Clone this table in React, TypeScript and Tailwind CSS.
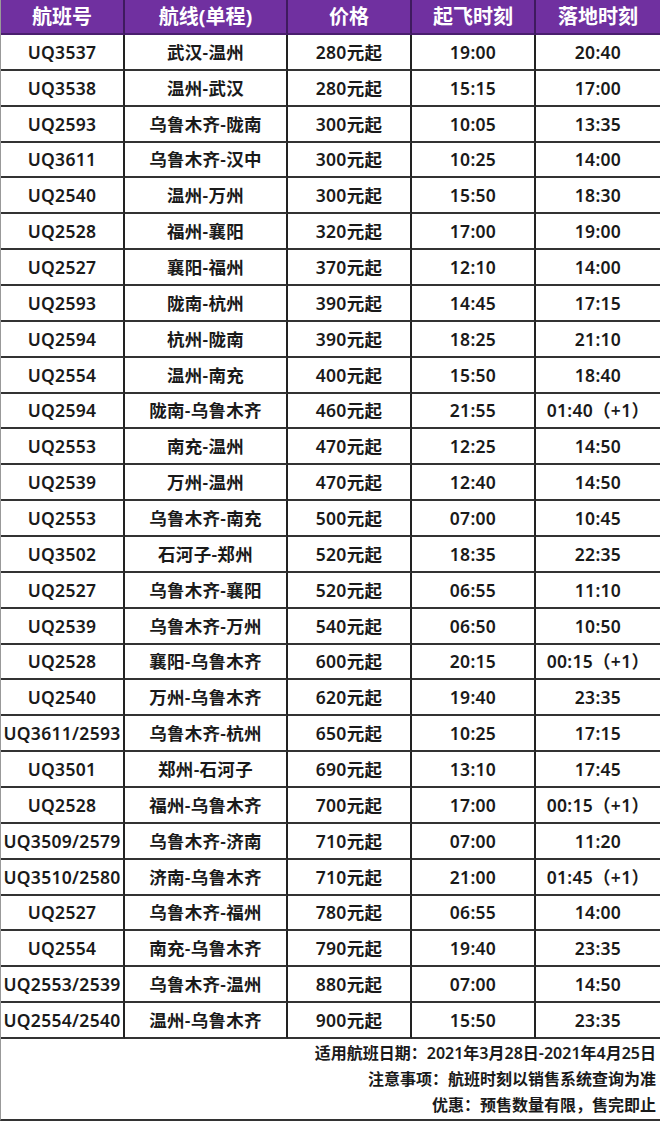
import React from "react";

const rows: string[][] = [
  ["UQ3537", "武汉-温州", "280元起", "19:00", "20:40"],
  ["UQ3538", "温州-武汉", "280元起", "15:15", "17:00"],
  ["UQ2593", "乌鲁木齐-陇南", "300元起", "10:05", "13:35"],
  ["UQ3611", "乌鲁木齐-汉中", "300元起", "10:25", "14:00"],
  ["UQ2540", "温州-万州", "300元起", "15:50", "18:30"],
  ["UQ2528", "福州-襄阳", "320元起", "17:00", "19:00"],
  ["UQ2527", "襄阳-福州", "370元起", "12:10", "14:00"],
  ["UQ2593", "陇南-杭州", "390元起", "14:45", "17:15"],
  ["UQ2594", "杭州-陇南", "390元起", "18:25", "21:10"],
  ["UQ2554", "温州-南充", "400元起", "15:50", "18:40"],
  ["UQ2594", "陇南-乌鲁木齐", "460元起", "21:55", "01:40（+1）"],
  ["UQ2553", "南充-温州", "470元起", "12:25", "14:50"],
  ["UQ2539", "万州-温州", "470元起", "12:40", "14:50"],
  ["UQ2553", "乌鲁木齐-南充", "500元起", "07:00", "10:45"],
  ["UQ3502", "石河子-郑州", "520元起", "18:35", "22:35"],
  ["UQ2527", "乌鲁木齐-襄阳", "520元起", "06:55", "11:10"],
  ["UQ2539", "乌鲁木齐-万州", "540元起", "06:50", "10:50"],
  ["UQ2528", "襄阳-乌鲁木齐", "600元起", "20:15", "00:15（+1）"],
  ["UQ2540", "万州-乌鲁木齐", "620元起", "19:40", "23:35"],
  ["UQ3611/2593", "乌鲁木齐-杭州", "650元起", "10:25", "17:15"],
  ["UQ3501", "郑州-石河子", "690元起", "13:10", "17:45"],
  ["UQ2528", "福州-乌鲁木齐", "700元起", "17:00", "00:15（+1）"],
  ["UQ3509/2579", "乌鲁木齐-济南", "710元起", "07:00", "11:20"],
  ["UQ3510/2580", "济南-乌鲁木齐", "710元起", "21:00", "01:45（+1）"],
  ["UQ2527", "乌鲁木齐-福州", "780元起", "06:55", "14:00"],
  ["UQ2554", "南充-乌鲁木齐", "790元起", "19:40", "23:35"],
  ["UQ2553/2539", "乌鲁木齐-温州", "880元起", "07:00", "14:50"],
  ["UQ2554/2540", "温州-乌鲁木齐", "900元起", "15:50", "23:35"],
];

const headers = ["航班号", "航线(单程)", "价格", "起飞时刻", "落地时刻"];

export default function App() {
  return (
    <main
      className="w-[660px] h-[1121px] bg-white overflow-hidden"
      style={{ fontFamily: '"Noto Sans", "Noto Sans CJK SC", sans-serif' }}
    >
      <div className="grid grid-cols-[124px_163px_124px_124px_1fr] border-l border-[#999]">
        {headers.map((h, i) => (
          <div
            key={h}
            className={`h-[35px] flex items-center justify-center bg-[#7030a0] text-white font-bold text-[20px] border-b-2 border-b-[#4a1f6e] ${
              i < 4 ? "border-r-2 border-r-[#3f1a5e]" : ""
            }`}
          >
            {h}
          </div>
        ))}
        {rows.map((r, ri) =>
          r.map((c, ci) => (
            <div
              key={ri + "-" + ci}
              className={`h-[35.86px] flex items-center justify-center text-[#1a1a1a] font-semibold text-[17.5px] tracking-[0.3px] border-b-2 border-b-[#333] ${
                ci < 4 ? "border-r-2 border-r-[#222]" : ""
              }`}
            >
              {c}
            </div>
          ))
        )}
      </div>
      <div className="h-[82px] border-l border-b-2 border-l-[#999] border-b-[#333] flex flex-col items-end pr-[4px] pt-[1px] text-[16px] font-semibold text-[#1a1a1a] leading-[26px]">
        <div>适用航班日期：2021年3月28日-2021年4月25日</div>
        <div>注意事项：航班时刻以销售系统查询为准</div>
        <div>优惠：预售数量有限，售完即止</div>
      </div>
    </main>
  );
}
